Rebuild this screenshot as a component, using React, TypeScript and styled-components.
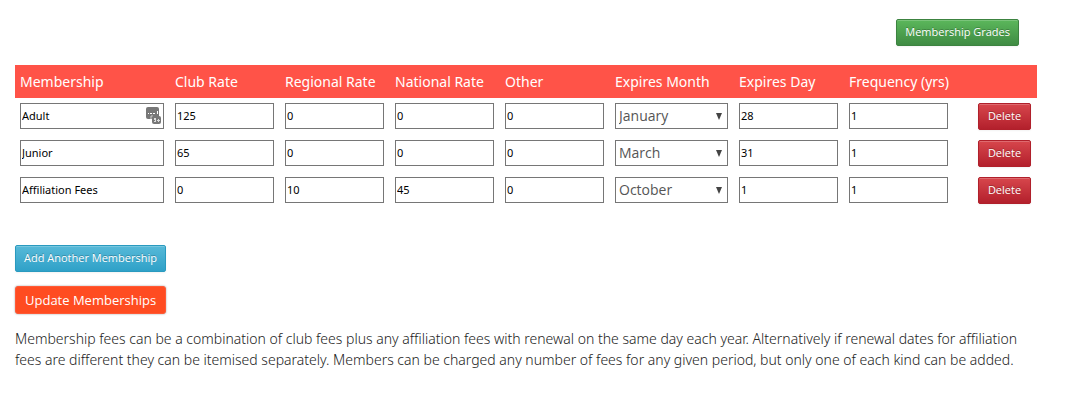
import React, { useState } from "react";
import styled, { createGlobalStyle } from "styled-components";

const GlobalStyle = createGlobalStyle`
  *, *::before, *::after { box-sizing: border-box; }
  body {
    margin: 0;
    background: #fff;
    color: #555;
    font-family: "Open Sans", "Noto Sans", sans-serif;
    font-size: 14px;
    line-height: 21px;
  }
`;

const Page = styled.main`
  padding: 19px 33px 33px 15px;
`;

const Toolbar = styled.div`
  display: flex;
  justify-content: flex-end;
  padding-right: 18px;
  margin-bottom: 19px;
`;

const tones = {
  success: { top: "#5bb75b", bottom: "#3f8b43", border: "#3c8340" },
  danger: { top: "#d7464c", bottom: "#b3202c", border: "#b0202b" },
  info: { top: "#57b9d8", bottom: "#2fa1c8", border: "#2a9abf" },
};

const Button = styled.button<{ $tone: keyof typeof tones }>`
  display: block;
  height: 27px;
  min-width: 53px;
  padding: 0 8px 2px;
  border: 1px solid ${(p) => tones[p.$tone].border};
  border-radius: 2px;
  background: linear-gradient(${(p) => tones[p.$tone].top}, ${(p) => tones[p.$tone].bottom});
  box-shadow: inset 0 1px 0 rgba(255, 255, 255, 0.2), 0 1px 2px rgba(0, 0, 0, 0.05);
  color: #fff;
  font-family: inherit;
  font-size: 11px;
  line-height: 21px;
  text-shadow: 0 -1px 0 rgba(0, 0, 0, 0.25);
  white-space: nowrap;
  cursor: pointer;
`;

const SubmitButton = styled.button`
  display: block;
  height: 28px;
  padding: 0 9px;
  border: 1px solid #ff5a36;
  border-radius: 3px;
  background: #ff4c21;
  box-shadow: 0 0 2px rgba(0, 0, 0, 0.4);
  color: #fff;
  font-family: inherit;
  font-size: 13px;
  line-height: 21px;
  white-space: nowrap;
  cursor: pointer;
`;

const Table = styled.table`
  width: 100%;
  table-layout: fixed;
  border-collapse: collapse;
`;

const Column = styled.col<{ $width?: number }>`
  width: ${(p) => (p.$width ? `${p.$width}px` : "auto")};
`;

const HeaderCell = styled.th`
  height: 33px;
  padding: 0 0 0 5px;
  background: #ff5348;
  color: #fff;
  font-family: "Noto Sans", "Open Sans", sans-serif;
  font-size: 14px;
  font-weight: 400;
  text-align: left;
  white-space: nowrap;
`;

const Cell = styled.td`
  padding: 5px 6px 5px 5px;
  vertical-align: top;
`;

const ActionCell = styled(Cell)`
  & > button { margin-left: auto; }
`;

const Field = styled.div`
  position: relative;
`;

const TextInput = styled.input`
  display: block;
  width: 100%;
  height: 26px;
  padding: 0 1px 1px;
  border: 1px solid #767676;
  border-radius: 0;
  background: #fff;
  color: #000;
  font-family: "Noto Sans", "Open Sans", sans-serif;
  font-size: 11px;
`;

const Select = styled.select`
  display: block;
  width: 100%;
  height: 26px;
  padding: 0 16px 2px 3px;
  border: 1px solid #767676;
  border-radius: 0;
  appearance: none;
  background: #fff;
  color: #555;
  font-family: inherit;
  font-size: 14px;
`;

const Arrow = styled.svg`
  position: absolute;
  top: 10px;
  right: 6px;
  pointer-events: none;
`;

const VaultBadge = styled.svg`
  position: absolute;
  top: 4px;
  right: 2px;
`;

const Actions = styled.div`
  display: flex;
  flex-direction: column;
  align-items: flex-start;
  gap: 14px;
  margin: 36px 0 14px;
`;

const Note = styled.p`
  margin: 0;
  color: #222;
  font-family: "Noto Sans", "Open Sans", sans-serif;
  font-weight: 300;
`;

const columns = [
  { label: "Membership", width: 155 },
  { label: "Club Rate", width: 110 },
  { label: "Regional Rate", width: 110 },
  { label: "National Rate", width: 110 },
  { label: "Other", width: 110 },
  { label: "Expires Month", width: 124 },
  { label: "Expires Day", width: 110 },
  { label: "Frequency (yrs)", width: 110 },
];

const MONTH_COLUMN = 5;

const months = [
  "January", "February", "March", "April", "May", "June",
  "July", "August", "September", "October", "November", "December",
];

const initialRows = [
  ["Adult", "125", "0", "0", "0", "January", "28", "1"],
  ["Junior", "65", "0", "0", "0", "March", "31", "1"],
  ["Affiliation Fees", "0", "10", "45", "0", "October", "1", "1"],
].map((values, id) => ({ id, values }));

function PasswordManagerIcon() {
  return (
    <VaultBadge width="16" height="18" viewBox="0 0 16 18" aria-hidden="true">
      <rect x="0" y="0" width="13" height="12" rx="2" fill="#777" />
      <path d="M2 6h1v1H2zM4 6h2v1H4zM7 6h2v1H7zM11 4h1v3h-1z" fill="#fff" />
      <path d="M5 12V9h2" fill="none" stroke="#ccc" />
      <rect x="6" y="9" width="9" height="8" rx="2" fill="#777" />
      <path d="M8 11h2v4H8v-1h1v-1H8zM12 12h1v1h1v1h-1v1h-1v-1h-1v-1h1z" fill="#ddd" />
    </VaultBadge>
  );
}

export default function App() {
  const [rows, setRows] = useState(initialRows);

  const update = (id: number, index: number, value: string) =>
    setRows((all) =>
      all.map((row) =>
        row.id === id
          ? { ...row, values: row.values.map((v, i) => (i === index ? value : v)) }
          : row
      )
    );
  const remove = (id: number) => setRows((all) => all.filter((row) => row.id !== id));
  const add = () =>
    setRows((all) => [
      ...all,
      {
        id: Math.max(-1, ...all.map((row) => row.id)) + 1,
        values: ["", "0", "0", "0", "0", "January", "1", "1"],
      },
    ]);

  return (
    <>
      <GlobalStyle />
      <Page>
        <Toolbar>
          <Button type="button" $tone="success">Membership Grades</Button>
        </Toolbar>
        <form onSubmit={(e) => e.preventDefault()}>
          <Table>
            <colgroup>
              {columns.map((c) => <Column key={c.label} $width={c.width} />)}
              <Column />
            </colgroup>
            <thead>
              <tr>
                {columns.map((c) => <HeaderCell key={c.label} scope="col">{c.label}</HeaderCell>)}
                <HeaderCell as="td" />
              </tr>
            </thead>
            <tbody>
              {rows.map((row, rowIndex) => (
                <tr key={row.id}>
                  {columns.map((column, i) => (
                    <Cell key={column.label}>
                      <Field>
                        {i === MONTH_COLUMN ? (
                          <>
                            <Select
                              aria-label={column.label}
                              value={row.values[i]}
                              onChange={(e) => update(row.id, i, e.target.value)}
                            >
                              {months.map((m) => <option key={m}>{m}</option>)}
                            </Select>
                            <Arrow width="6" height="7" viewBox="0 0 6 7" aria-hidden="true">
                              <path d="M0 0h6L3 7z" fill="#444" />
                            </Arrow>
                          </>
                        ) : (
                          <TextInput
                            type="text"
                            aria-label={column.label}
                            value={row.values[i]}
                            onChange={(e) => update(row.id, i, e.target.value)}
                          />
                        )}
                        {i === 0 && rowIndex === 0 && <PasswordManagerIcon />}
                      </Field>
                    </Cell>
                  ))}
                  <ActionCell>
                    <Button type="button" $tone="danger" onClick={() => remove(row.id)}>
                      Delete
                    </Button>
                  </ActionCell>
                </tr>
              ))}
            </tbody>
          </Table>
          <Actions>
            <Button type="button" $tone="info" onClick={add}>Add Another Membership</Button>
            <SubmitButton type="submit">Update Memberships</SubmitButton>
          </Actions>
        </form>
        <Note>
          Membership fees can be a combination of club fees plus any affiliation fees with renewal
          on the same day each year. Alternatively if renewal dates for affiliation fees are
          different they can be itemised separately. Members can be charged any number of fees for
          any given period, but only one of each kind can be added.
        </Note>
      </Page>
    </>
  );
}
